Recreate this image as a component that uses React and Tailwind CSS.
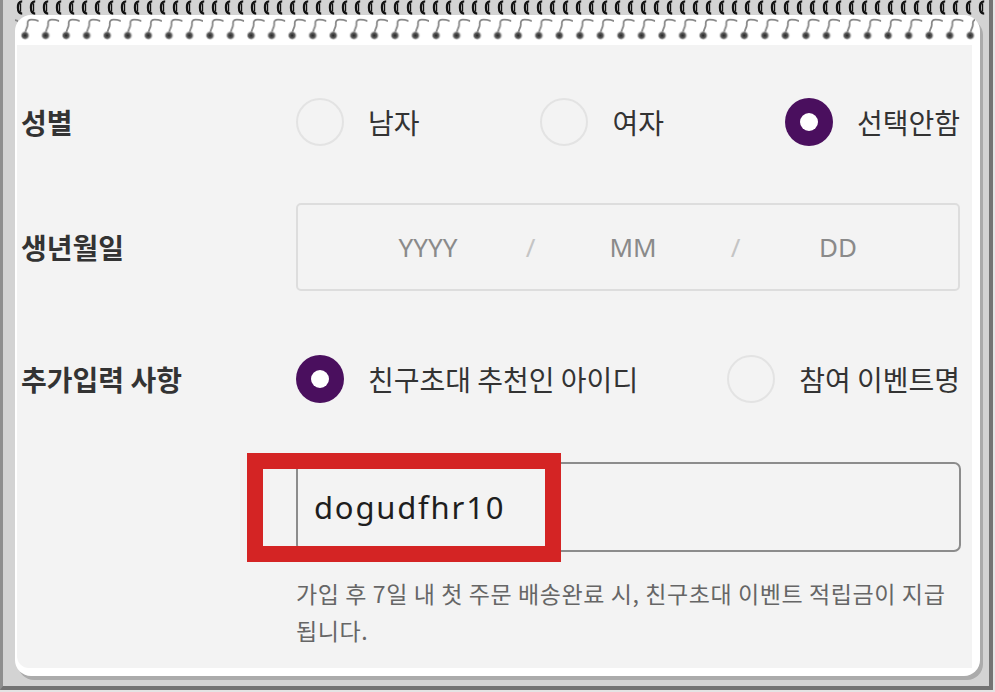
import { useState } from "react";

const kr = { fontFamily: "'Noto Sans CJK KR', 'Noto Sans', sans-serif" };
const latin = { fontFamily: "'Noto Sans', 'Noto Sans CJK KR', sans-serif" };

const labelClass = "text-[28px] font-bold text-[#333333] leading-none";
const optionClass = "text-[28px] text-[#333333] leading-none";

// black spiral rings along the top edge
const Rings = () => (
  <svg width="986" height="15" className="block">
    <defs>
      <pattern id="ring" x="13" y="0" width="13" height="15" patternUnits="userSpaceOnUse">
        <path
          d="M6.2 1.4 C2.6 1.4 2 4.5 2 7.5 C2 10.5 2.6 13.6 6.2 13.6"
          fill="none"
          stroke="#111"
          strokeWidth="2.4"
        />
        <path d="M4.6 3.2 L4.6 11.8" stroke="#111" strokeWidth="1.2" />
      </pattern>
    </defs>
    <rect x="10" y="0" width="975" height="15" fill="url(#ring)" />
  </svg>
);

// grey hooks hanging inside the white band of the card
const Hooks = () => (
  <svg width="965" height="30" className="block">
    <defs>
      <radialGradient id="ball" cx="45%" cy="55%" r="50%">
        <stop offset="0%" stopColor="#252525" />
        <stop offset="55%" stopColor="#606060" />
        <stop offset="100%" stopColor="#c8c8c8" stopOpacity="0" />
      </radialGradient>
      <pattern id="hook" x="3" y="0" width="20.55" height="30" patternUnits="userSpaceOnUse">
        <path
          d="M7.5 19 C6.2 15.5 10 13 9.6 9 C9.3 6 10.8 4.6 13.4 4.6 C16.8 4.6 19.8 5.4 22.5 6.8"
          fill="none"
          stroke="#888888"
          strokeWidth="1.8"
        />
        <circle cx="7.5" cy="20" r="5" fill="url(#ball)" />
      </pattern>
    </defs>
    <rect x="0" y="0" width="960" height="30" fill="url(#hook)" />
  </svg>
);

const Radio = ({ checked, label, onSelect }) => (
  <button type="button" onClick={onSelect} className="flex items-center gap-[24px]">
    {checked ? (
      <span className="w-[48px] h-[48px] rounded-full bg-[#4a0f5e] flex items-center justify-center">
        <span className="w-[18px] h-[18px] rounded-full bg-white" />
      </span>
    ) : (
      <span className="w-[48px] h-[48px] rounded-full border-2 border-[#e3e3e3]" />
    )}
    <span className={optionClass} style={kr}>
      {label}
    </span>
  </button>
);

export default function App() {
  const [gender, setGender] = useState("none");
  const [extra, setExtra] = useState("friend");
  const [friendId, setFriendId] = useState("dogudfhr10");

  return (
    <div className="w-[995px] h-[692px] bg-[#e4e4e4] overflow-hidden">
      <div className="w-[993px] h-[690px] bg-[#d3d3d3] border-l-[3px] border-l-[#8e8e8e] border-r-[4px] border-r-[#737373] border-b-[4px] border-b-[#737373] flex flex-col">
        <Rings />

        <div className="ml-[12px] w-[965px] h-[661px] bg-white rounded-[16px] shadow-[3px_4px_0_#ababab] flex flex-col">
          <Hooks />

          <div className="ml-[2px] w-[955px] h-[623px] bg-[#f3f3f3] rounded-bl-[12px] pl-[4px] pr-[12px] pt-[53px]">
            <div className="grid grid-cols-[275px_664px]">
              {/* 성별 */}
              <div className="h-[48px] flex items-center">
                <span className={labelClass} style={kr}>성별</span>
              </div>
              <div className="h-[48px] flex items-center justify-between">
                <Radio label="남자" checked={gender === "m"} onSelect={() => setGender("m")} />
                <Radio label="여자" checked={gender === "f"} onSelect={() => setGender("f")} />
                <Radio label="선택안함" checked={gender === "none"} onSelect={() => setGender("none")} />
              </div>

              {/* 생년월일 */}
              <div className="mt-[57px] h-[88px] flex items-center">
                <span className={labelClass} style={kr}>생년월일</span>
              </div>
              <div className="mt-[57px] h-[88px] border-2 border-[#dddddd] rounded-[5px] pl-[40px] grid grid-cols-[180px_25px_180px_25px_180px] items-center text-[26px] text-[#8a8a8a]" style={latin}>
                <span className="text-center">YYYY</span>
                <span className="text-center text-[#c4c4c4]">/</span>
                <span className="text-center">MM</span>
                <span className="text-center text-[#c4c4c4]">/</span>
                <span className="text-center">DD</span>
              </div>

              {/* 추가입력 사항 */}
              <div className="mt-[64px] h-[48px] flex items-center">
                <span className={labelClass} style={kr}>추가입력 사항</span>
              </div>
              <div className="mt-[64px] h-[48px] flex items-center justify-between">
                <Radio label="친구초대 추천인 아이디" checked={extra === "friend"} onSelect={() => setExtra("friend")} />
                <Radio label="참여 이벤트명" checked={extra === "event"} onSelect={() => setExtra("event")} />
              </div>

              <div />
              <div className="mt-[59px] relative">
                <input
                  type="text"
                  value={friendId}
                  onChange={(e) => setFriendId(e.target.value)}
                  className="w-[665px] h-[90px] border-2 border-[#8c8c8c] rounded-[7px] bg-transparent pl-[16px] text-[31px] tracking-[1.8px] text-[#1e1e1e] outline-none"
                  style={latin}
                />
                <div className="absolute left-[-49px] top-[-9px] w-[314px] h-[109px] border-[16px] border-[#d42424] pointer-events-none" />
              </div>

              <div />
              <p className="mt-[23px] text-[23px] tracking-[0.6px] leading-[37px] text-[#666666] whitespace-nowrap" style={kr}>
                가입 후 7일 내 첫 주문 배송완료 시, 친구초대 이벤트 적립금이 지급
                <br />
                됩니다.
              </p>
            </div>
          </div>
        </div>
      </div>
    </div>
  );
}
